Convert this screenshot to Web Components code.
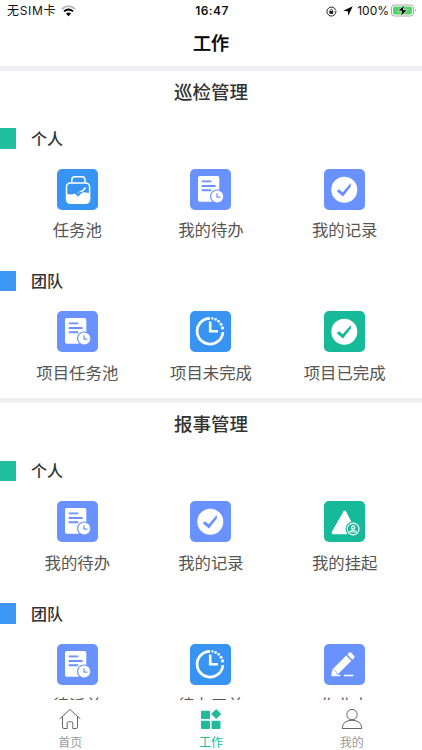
<!DOCTYPE html>
<html lang="zh-CN">
<head>
<meta charset="utf-8">
<title>工作</title>
<style>
  html, body { margin: 0; height: 100%; }
  body {
    overflow: hidden;
    background: #fff;
    font-family: "Liberation Sans", "Noto Sans CJK SC", sans-serif;
  }
</style>
</head>
<body>
<work-app></work-app>

<script>
const DOC = `
  <rect x="8" y="7" width="21.3" height="25.8" rx="1.8" fill="#fff"/>
  <path d="M11.7 12.4H21.3M11.7 17H25.6M11.7 21.2H21.3" stroke="currentColor" stroke-width="1.9"/>
  <circle cx="27.2" cy="27.6" r="7.2" fill="currentColor"/>
  <circle cx="27.2" cy="27.6" r="6" fill="#fff"/>
  <path d="M27 24.3V28.2H30.4" fill="none" stroke="currentColor" stroke-width="1.2"/>`;

const CHECK = `
  <circle cx="20.3" cy="20.8" r="13" fill="#fff"/>
  <path d="M12.7 22.3L15 20.2L18.7 23.3L26.8 14V17.6L19 27.5Z" fill="currentColor"/>`;

const GLYPHS = {
  pool: `
    <path d="M14.8 13.6V10.8Q14.8 7.7 17.8 7.7H25Q28 7.7 28 10.8V13.6" fill="none" stroke="#fff" stroke-width="1.5"/>
    <rect x="9.5" y="13.9" width="23.1" height="20.4" rx="4" fill="none" stroke="#fff" stroke-width="1.5"/>
    <path d="M9.5 24.6Q14 26.5 18 24.6Q25 22 32.6 24.2V30.3Q32.6 34.3 28.6 34.3H13.5Q9.5 34.3 9.5 30.3Z" fill="#fff"/>
    <path d="M17.6 22.6L21 26.3L24 22.8" fill="none" stroke="currentColor" stroke-width="2"/>
    <path d="M22.6 22.8L25 22.2L28.6 18.6" fill="none" stroke="#fff" stroke-width="1.5"/>
    <path d="M21 26.2L25.2 22.8" fill="none" stroke="currentColor" stroke-width="1.3"/>`,
  doc: DOC,
  check: CHECK,
  clock: `
    <path d="M20 7.3A12.9 12.9 0 1 0 32.9 21" fill="none" stroke="#fff" stroke-width="2.7"/>
    <g fill="#fff">
      <circle cx="22.4" cy="7.4" r="1.2"/><circle cx="25.6" cy="8.4" r="1.3"/>
      <circle cx="28.6" cy="10.3" r="1.4"/><circle cx="31" cy="13.2" r="1.5"/>
      <circle cx="32.5" cy="16.9" r="1.6"/>
    </g>
    <path d="M20.2 10.6V20.2H28" fill="none" stroke="#fff" stroke-width="2.6"/>`,
  triangle: `
    <path d="M20.7 11L31.5 31.8H9Z" fill="#fff" stroke="#fff" stroke-width="2.8" stroke-linejoin="round"/>
    <circle cx="29.1" cy="28" r="7.6" fill="currentColor"/>
    <circle cx="29.1" cy="28" r="5.9" fill="none" stroke="#fff" stroke-width="1.1"/>
    <circle cx="29.1" cy="26.4" r="1.6" fill="none" stroke="#fff" stroke-width="1.3"/>
    <path d="M25.5 31C25.8 28.7 32.4 28.7 32.7 31Z" fill="none" stroke="#fff" stroke-width="1"/>`,
  pencil: `
    <path d="M8.4 25.4L22.2 11.6L27.3 16.8L13.8 30.2L7 32.6Z" fill="#fff"/>
    <path d="M23.3 10.6L25.1 8.6Q26.1 7.7 27.2 8.7L30.2 11.9Q31 12.9 30.2 13.8L28.4 15.7Z" fill="#fff"/>
    <path d="M8.8 25.9Q12.6 26.2 13.3 30.2" fill="none" stroke="currentColor" stroke-width=".6"/>
    <path d="M9 31.4H16.2M19.8 31.4H29.3" stroke="#fff" stroke-width="1.5"/>`,
};

const COLORS = {
  blue: '#3894f2',
  violet: '#6a92ff',
  green: '#16b998',
};

const SECTIONS = [
  {
    title: '巡检管理',
    groups: [
      { name: '个人', color: '#21bfa0', items: [
        ['pool', 'blue', '任务池'],
        ['doc', 'violet', '我的待办'],
        ['check', 'violet', '我的记录'],
      ] },
      { name: '团队', color: '#3c98f4', items: [
        ['doc', 'violet', '项目任务池'],
        ['clock', 'blue', '项目未完成'],
        ['check', 'green', '项目已完成'],
      ] },
    ],
  },
  {
    title: '报事管理',
    groups: [
      { name: '个人', color: '#21bfa0', items: [
        ['doc', 'violet', '我的待办'],
        ['check', 'violet', '我的记录'],
        ['triangle', 'green', '我的挂起'],
      ] },
      { name: '团队', color: '#3c98f4', items: [
        ['doc', 'violet', '待派单'],
        ['clock', 'blue', '待办工单'],
        ['pencil', 'violet', '作业中'],
      ] },
    ],
  },
];

class StatusBar extends HTMLElement {
  constructor() {
    super();
    this.attachShadow({ mode: 'open' }).innerHTML = `
      <style>
        :host {
          display: grid;
          grid-template-columns: 1fr auto 1fr;
          align-items: center;
          height: 22px;
          padding: 0 5px 0 7px;
          font: 12px/22px Inter, "Noto Sans CJK SC", sans-serif;
          color: #111;
        }
        div { display: flex; align-items: center; white-space: nowrap; }
        .left { gap: 5px; letter-spacing: .7px; }
        .time { font-weight: 600; font-size: 12px; letter-spacing: .4px; }
        .right { justify-content: flex-end; }
        svg { display: block; flex: none; }
      </style>
      <div class="left">
        <span>无SIM卡</span>
        <svg width="15" height="12" viewBox="0 0 15 12" fill="none">
          <path d="M.8 4Q7.5-1.8 14.2 4" stroke="#bbb" stroke-width="1.7"/>
          <path d="M3 6.4Q7.5 2.5 12 6.4" stroke="#000" stroke-width="1.9"/>
          <path d="M5 8.6Q7.5 6.4 10 8.6L7.5 11.2Z" fill="#000"/>
        </svg>
      </div>
      <div class="time">16:47</div>
      <div class="right">
        <svg width="11" height="11" viewBox="0 0 11 11" fill="none" stroke="#222">
          <path d="M9.6 7.2A4.5 4.5 0 1 1 9.7 4.2"/>
          <path d="M8.1 5.2H11L9.6 7.1Z" fill="#222" stroke="none"/>
          <rect x="3.4" y="5" width="3.8" height="2.9" fill="#222" stroke="none"/>
          <path d="M4.1 5V4.1Q5.3 2.3 6.5 4.1V5" stroke-width=".8"/>
        </svg>
        <svg width="10" height="10" viewBox="0 0 10 10" style="margin: 0 4px 0 6px">
          <path d="M9.7.3L5.4 9.8L4.8 5.3L.3 4.7Z" fill="#000"/>
        </svg>
        <span>100%</span>
        <svg width="26" height="13" viewBox="0 0 26 13" style="margin: 0 0 2px 2px">
          <rect x=".5" y="1" width="22" height="11" rx="3" fill="#fff" stroke="#aaa"/>
          <rect x="2" y="2.5" width="19" height="8" rx="1.7" fill="#53d466"/>
          <path d="M24 5Q26 6.5 24 8Z" fill="#aaa"/>
          <path d="M13.7.5L6.7 7.1H10.8L9.5 12.5L16.5 5.8H12.2Z" fill="#000" stroke="#fff" stroke-width=".7"/>
        </svg>
      </div>`;
  }
}

class NavTitle extends HTMLElement {
  constructor() {
    super();
    this.attachShadow({ mode: 'open' }).innerHTML = `
      <style>
        :host {
          display: block;
          height: 43.5px;
          font: 500 18px/41px "Noto Sans CJK SC", sans-serif;
          text-align: center;
          color: #000;
          -webkit-text-stroke: .25px;
        }
      </style>
      <slot></slot>`;
  }
}

class WorkItem extends HTMLElement {
  connectedCallback() {
    const glyph = this.getAttribute('glyph');
    const color = COLORS[this.getAttribute('color')];
    this.attachShadow({ mode: 'open' }).innerHTML = `
      <style>
        :host {
          display: flex;
          flex-direction: column;
          align-items: center;
          gap: 6.5px;
          font: 16.4px/26px "Noto Sans CJK SC", sans-serif;
          color: #555;
          white-space: nowrap;
        }
        svg { display: block; border-radius: 5px; color: ${color}; background: ${color}; }
      </style>
      <svg width="41" height="41" viewBox="0 0 41 41">${GLYPHS[glyph]}</svg>
      <slot></slot>`;
  }
}

class WorkGroup extends HTMLElement {
  connectedCallback() {
    this.attachShadow({ mode: 'open' }).innerHTML = `
      <style>
        :host { display: block; height: 142.5px; }
        header {
          display: flex;
          align-items: center;
          gap: 15.5px;
          height: 20.5px;
          margin-bottom: 20px;
          font: 500 16px/20px "Noto Sans CJK SC", sans-serif;
          color: #333;
        }
        header i { width: 15.5px; height: 100%; background: ${this.getAttribute('color')}; }
        header span { padding-bottom: 1.5px; }
        .items {
          display: grid;
          grid-template-columns: repeat(3, 1fr);
          padding: 0 10.5px;
        }
      </style>
      <header><i></i><span>${this.getAttribute('name')}</span></header>
      <div class="items"><slot></slot></div>`;
  }
}

class WorkSection extends HTMLElement {
  connectedCallback() {
    this.attachShadow({ mode: 'open' }).innerHTML = `
      <style>
        :host { display: block; height: 327.5px; border-top: 5px solid #efeff4; }
        h2 {
          margin: 0 0 16.5px;
          font: 500 18.5px/41px "Noto Sans CJK SC", sans-serif;
          text-align: center;
          color: #333;
        }
      </style>
      <h2>${this.getAttribute('title')}</h2>
      <slot></slot>`;
  }
}

class TabBar extends HTMLElement {
  constructor() {
    super();
    this.attachShadow({ mode: 'open' }).innerHTML = `
      <style>
        :host {
          display: grid;
          grid-template-columns: repeat(3, 1fr);
          height: 50px;
          background: #fff;
          font: 12px/18px "Noto Sans CJK SC", sans-serif;
          color: #999;
        }
        div { display: flex; flex-direction: column; align-items: center; padding-top: 8px; gap: 2.5px; }
        .active { color: #21bb9b; }
        svg { display: block; fill: none; stroke: #666; stroke-width: 1; }
        .active svg { fill: #21bb9b; stroke: none; }
      </style>
      <div>
        <svg width="22" height="22" viewBox="0 0 22 22">
          <path d="M1 10.6L11 1.5L21 10.6M3.5 9V18.8Q3.5 20.5 5 20.5H8.2V15Q8.2 13.8 9.4 13.8H12.6Q13.8 13.8 13.8 15V20.5H17Q18.5 20.5 18.5 18.8V9" stroke-linejoin="round" stroke-linecap="round"/>
        </svg>
        <span>首页</span>
      </div>
      <div class="active">
        <svg width="22" height="22" viewBox="0 0 22 22">
          <rect x="1" y="2.7" width="9" height="8.4" rx="1"/>
          <rect x="1" y="12.7" width="9" height="8.4" rx="1"/>
          <rect x="11.5" y="12.7" width="9" height="8.4" rx="1"/>
          <rect x="12.6" y="2.4" width="7.2" height="7.2" rx=".7" transform="rotate(45 16.2 6)"/>
        </svg>
        <span>工作</span>
      </div>
      <div>
        <svg width="22" height="22" viewBox="0 0 22 22">
          <circle cx="11" cy="6.6" r="5.2"/>
          <path d="M1.2 20.5Q1.5 12.3 11 12.3Q20.5 12.3 20.8 20.5Z" stroke-linejoin="round"/>
        </svg>
        <span>我的</span>
      </div>`;
  }
}

class WorkApp extends HTMLElement {
  constructor() {
    super();
    this.attachShadow({ mode: 'open' });
  }

  connectedCallback() {
    this.shadowRoot.innerHTML = `
      <style>
        :host { display: flex; flex-direction: column; height: 100vh; }
        main { flex: 1; min-height: 0; overflow: hidden; }
      </style>
      <status-bar></status-bar>
      <nav-title>工作</nav-title>
      <main>${SECTIONS.map((s) => this.renderSection(s)).join('')}</main>
      <tab-bar></tab-bar>`;
  }

  renderSection(section) {
    let groups = section.groups.map((group) => {
      let items = group.items.map(([glyph, color, label]) =>
        `<work-item glyph="${glyph}" color="${color}">${label}</work-item>`);
      return `<work-group name="${group.name}" color="${group.color}">${items.join('')}</work-group>`;
    });

    return `<work-section title="${section.title}">${groups.join('')}</work-section>`;
  }
}

customElements.define('status-bar', StatusBar);
customElements.define('nav-title', NavTitle);
customElements.define('work-item', WorkItem);
customElements.define('work-group', WorkGroup);
customElements.define('work-section', WorkSection);
customElements.define('tab-bar', TabBar);
customElements.define('work-app', WorkApp);
</script>
</body>
</html>
